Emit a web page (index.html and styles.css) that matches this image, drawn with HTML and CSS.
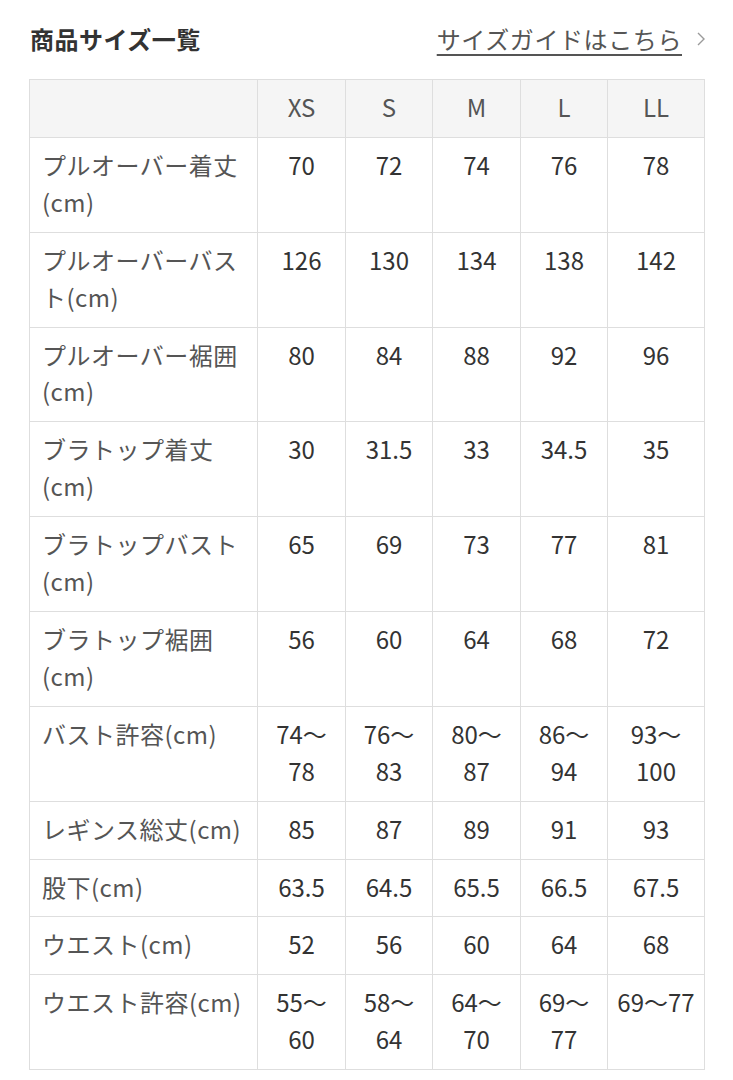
FILE: index.html
```html
<!DOCTYPE html>
<html lang="ja">
<head>
<meta charset="utf-8">
<link rel="stylesheet" href="styles.css">
</head>
<body>
<div class="page">
  <div class="head">
    <h2 class="title">商品サイズ一覧</h2>
    <a class="guide" href="#"><span class="guide-text">サイズガイドはこちら</span><svg class="chev" width="10" height="16" viewBox="0 0 10 16"><path d="M2 2 L8 8 L2 14" fill="none" stroke="#9a9a9a" stroke-width="1.4"/></svg></a>
  </div>
  <table class="size">
    <colgroup>
      <col class="c-label"><col class="c-n1"><col class="c-n2"><col class="c-n1"><col class="c-n2"><col class="c-last">
    </colgroup>
    <thead>
      <tr><th></th><th>XS</th><th>S</th><th>M</th><th>L</th><th>LL</th></tr>
    </thead>
    <tbody>
      <tr><td class="lab">プルオーバー着丈(cm)</td><td>70</td><td>72</td><td>74</td><td>76</td><td>78</td></tr>
      <tr><td class="lab">プルオーバーバスト(cm)</td><td>126</td><td>130</td><td>134</td><td>138</td><td>142</td></tr>
      <tr><td class="lab">プルオーバー裾囲(cm)</td><td>80</td><td>84</td><td>88</td><td>92</td><td>96</td></tr>
      <tr><td class="lab">ブラトップ着丈(cm)</td><td>30</td><td>31.5</td><td>33</td><td>34.5</td><td>35</td></tr>
      <tr><td class="lab">ブラトップバスト(cm)</td><td>65</td><td>69</td><td>73</td><td>77</td><td>81</td></tr>
      <tr><td class="lab">ブラトップ裾囲(cm)</td><td>56</td><td>60</td><td>64</td><td>68</td><td>72</td></tr>
      <tr><td class="lab">バスト許容(cm)</td><td>74〜78</td><td>76〜83</td><td>80〜87</td><td>86〜94</td><td>93〜100</td></tr>
      <tr><td class="lab">レギンス総丈(cm)</td><td>85</td><td>87</td><td>89</td><td>91</td><td>93</td></tr>
      <tr><td class="lab">股下(cm)</td><td>63.5</td><td>64.5</td><td>65.5</td><td>66.5</td><td>67.5</td></tr>
      <tr><td class="lab">ウエスト(cm)</td><td>52</td><td>56</td><td>60</td><td>64</td><td>68</td></tr>
      <tr><td class="lab">ウエスト許容(cm)</td><td>55〜60</td><td>58〜64</td><td>64〜70</td><td>69〜77</td><td>69〜77</td></tr>
    </tbody>
  </table>
</div>
</body>
</html>
```

FILE: styles.css
```css
html, body {
  margin: 0;
  padding: 0;
  background: #fff;
}
body {
  font-family: "Noto Sans CJK JP", "Noto Sans", sans-serif;
  color: #333;
}
.page {
  padding: 21px 29px 0 29px;
}
.head {
  display: flex;
  align-items: center;
  justify-content: space-between;
  height: 36px;
  margin-bottom: 22px;
}
.title {
  margin: 0 0 0 1px;
  font-size: 24px;
  font-weight: 700;
  line-height: 36px;
  color: #333;
  letter-spacing: 0.5px;
}
.guide {
  display: flex;
  align-items: center;
  gap: 14px;
  color: #555;
  text-decoration: none;
  font-size: 24px;
  line-height: 36px;
  letter-spacing: 0.6px;
}
.guide-text {
  text-decoration: underline;
  text-decoration-color: #555;
  text-underline-offset: 5px;
  text-decoration-thickness: 2px;
}
.chev {
  display: block;
  margin-right: -2px;
}
.size {
  width: 675px;
  border-collapse: collapse;
  table-layout: fixed;
  font-size: 24px;
  line-height: 36.9px;
}
.c-label { width: 228px; }
.c-n1 { width: 88px; }
.c-n2 { width: 87px; }
.c-last { width: 97px; }
.size th, .size td {
  border: 1px solid #dedede;
  padding: 9px 9px 11px;
  text-align: center;
  vertical-align: top;
  font-weight: 400;
}
.size th {
  background: #f5f5f5;
  color: #555;
}
.size td {
  color: #333;
}
.size td.lab {
  text-align: left;
  padding-left: 12px;
  padding-right: 6px;
  color: #555;
  letter-spacing: 0.5px;
}
```
